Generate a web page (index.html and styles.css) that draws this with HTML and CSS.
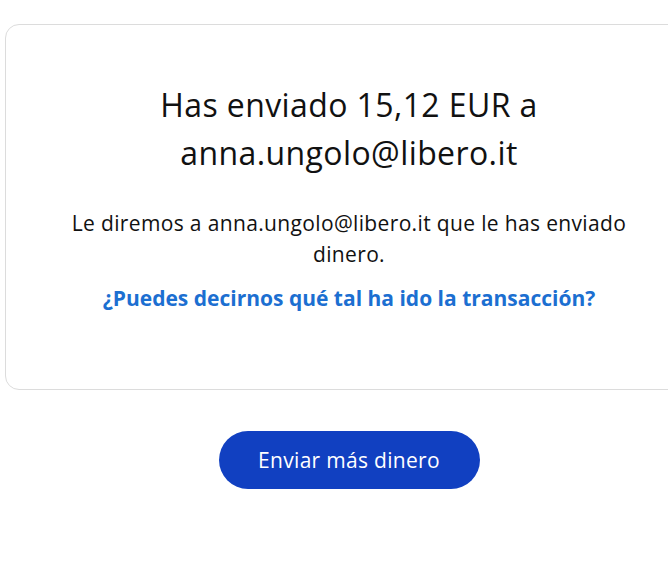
FILE: index.html
```html
<!DOCTYPE html>
<html lang="es">
<head>
<meta charset="utf-8">
<title>Pago enviado</title>
<link rel="stylesheet" href="styles.css">
</head>
<body>
<main class="page">
  <section class="card">
    <h1 class="title">Has enviado 15,12 EUR a anna.ungolo@libero.it</h1>
    <p class="note">Le diremos a anna.ungolo@libero.it que le has enviado dinero.</p>
    <a class="feedback" href="#">¿Puedes decirnos qué tal ha ido la transacción?</a>
  </section>
  <div class="actions">
    <a class="btn" href="#">Enviar más dinero</a>
  </div>
</main>
</body>
</html>
```
FILE: styles.css
```css
html, body {
  margin: 0;
  padding: 0;
  overflow: hidden;
  background: #ffffff;
}
body {
  font-family: "Open Sans", "Noto Sans", sans-serif;
  color: #111111;
}
.page {
  width: 688px;
  margin-left: 5px;
  padding-top: 24px;
}
.card {
  border: 1px solid #dcdcdc;
  border-radius: 14px;
  padding: 56px 40px 0;
  box-sizing: border-box;
  height: 366px;
  display: flex;
  flex-direction: column;
  align-items: center;
  text-align: center;
}
.title {
  margin: 0;
  font-size: 32px;
  line-height: 48px;
  font-weight: 400;
  letter-spacing: 0.4px;
  width: 440px;
}
.note {
  margin: 31px 0 0;
  font-size: 21px;
  line-height: 31px;
  letter-spacing: 0.35px;
  width: 570px;
}
.feedback {
  margin-top: 13px;
  font-size: 21px;
  line-height: 30px;
  font-weight: 700;
  color: #1c6fd1;
  text-decoration: none;
}
.actions {
  display: flex;
  justify-content: center;
  padding-top: 41px;
}
.btn {
  display: flex;
  align-items: center;
  justify-content: center;
  width: 261px;
  height: 58px;
  border-radius: 29px;
  background: #1140c1;
  color: #ffffff;
  font-size: 21px;
  letter-spacing: 0.3px;
  font-weight: 500;
  text-decoration: none;
}
```
